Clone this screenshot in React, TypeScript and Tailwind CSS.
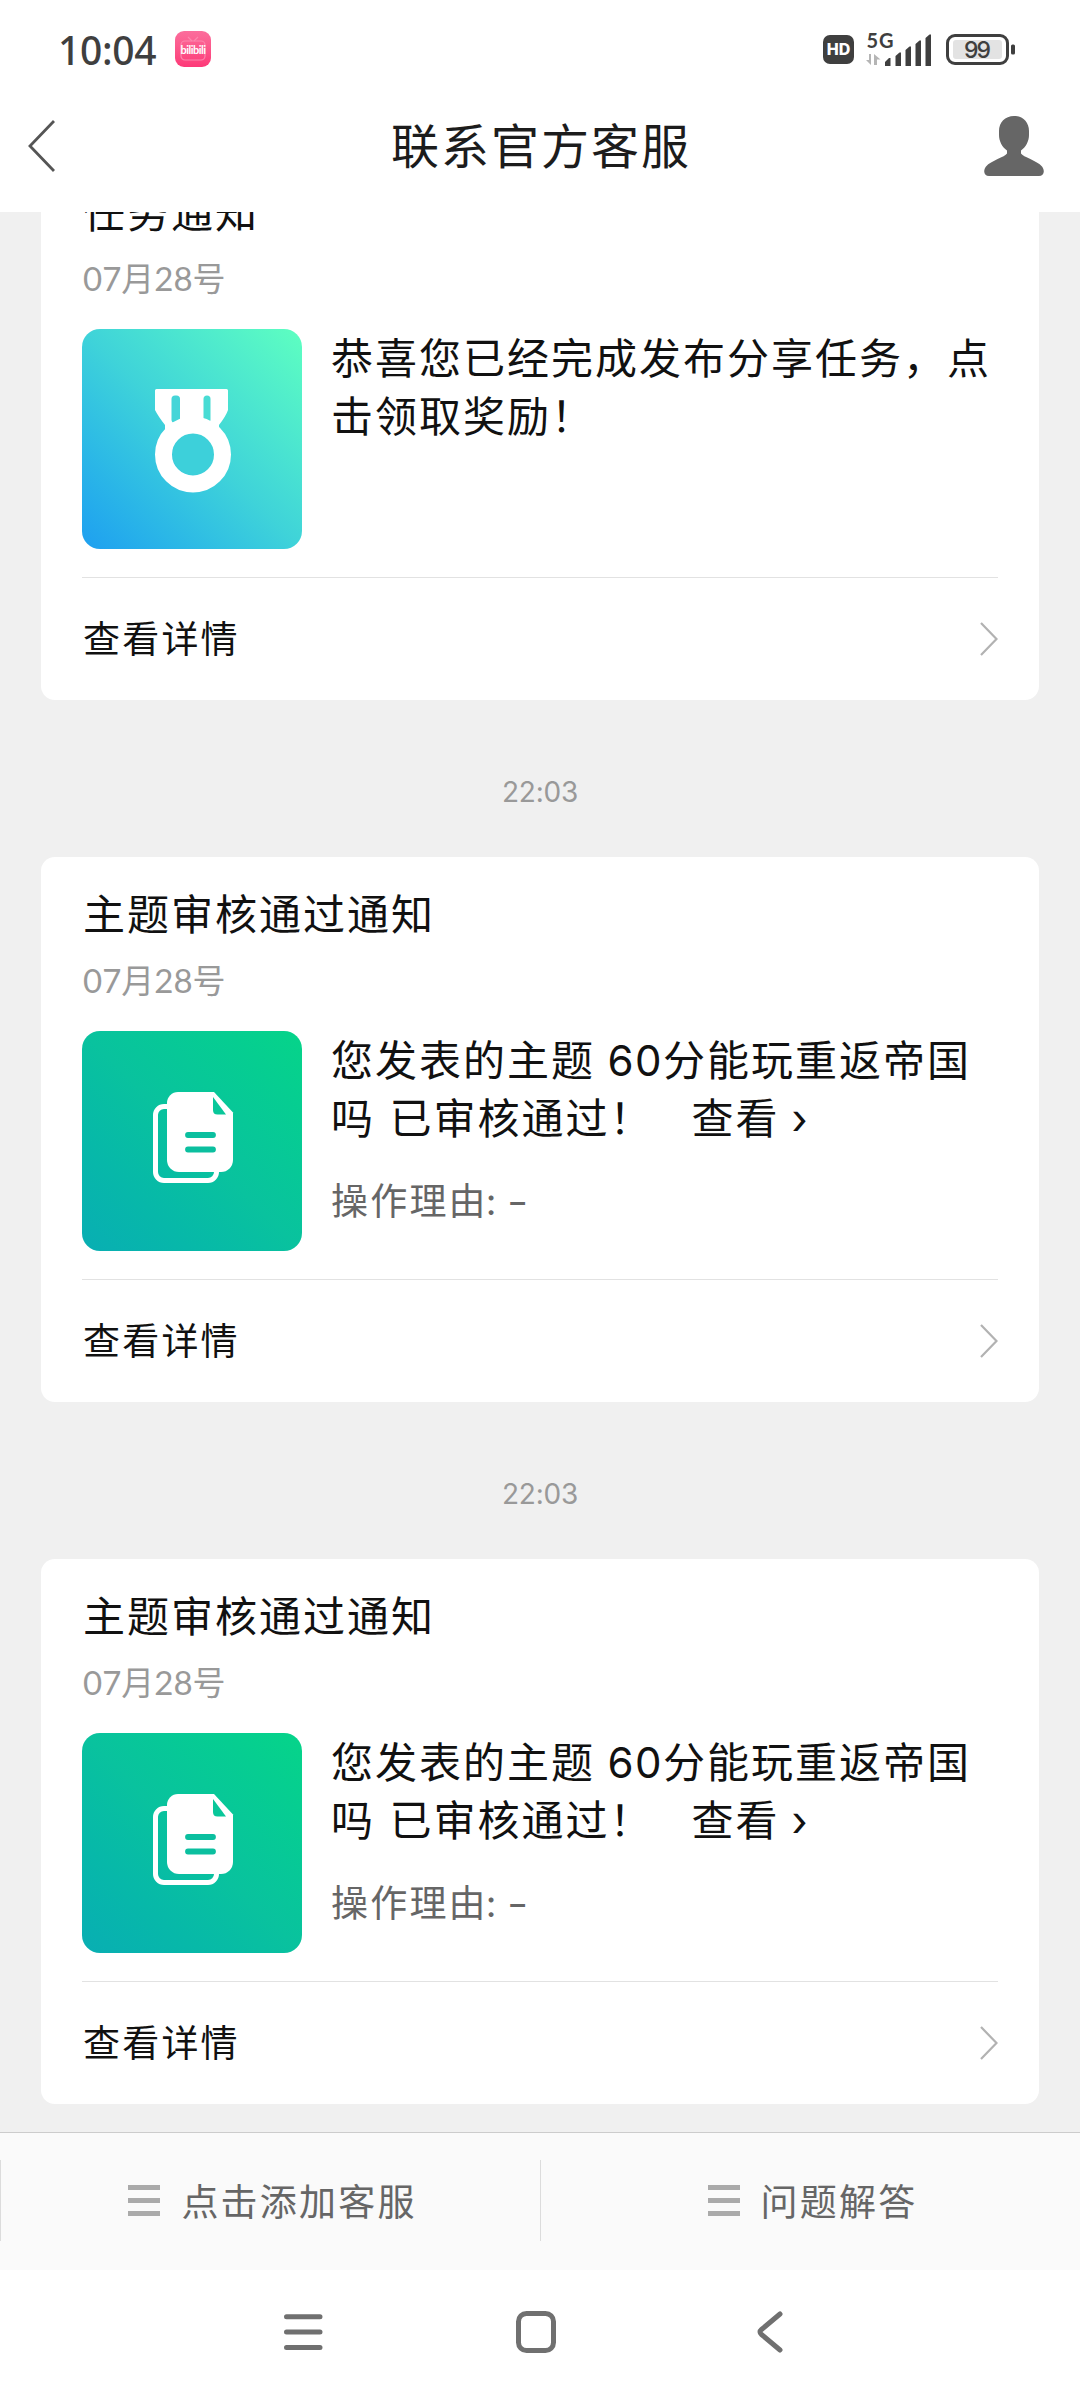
/**
 * Service account chat — status bar, header, notice cards and bottom menu.
 */

// ─── Types ────────────────────────────────────────────────────────────────────

interface Notice {
    id: number;
    /** Time shown above the card */
    time?: string;
    title: string;
    date: string;
    kind: "medal" | "topic";
}

const NOTICES: Notice[] = [
    { id: 1, title: "任务通知", date: "07月28号", kind: "medal" },
    { id: 2, time: "22:03", title: "主题审核通过通知", date: "07月28号", kind: "topic" },
    { id: 3, time: "22:03", title: "主题审核通过通知", date: "07月28号", kind: "topic" },
];

// ─── Icons ────────────────────────────────────────────────────────────────────

function BilibiliIcon() {
    return (
        <div className="relative flex h-9 w-9 items-center justify-center rounded-[9px] bg-linear-to-b from-[#fb6d9c] to-[#fd3878]">
            <svg className="absolute inset-0" width="36" height="36" viewBox="0 0 36 36" fill="none" stroke="#fc86ad" strokeWidth="1.2">
                <path d="M13 6l4 4M23 6l-4 4" />
                <rect x="6" y="10" width="24" height="19" rx="4" />
            </svg>
            <span className="relative font-['Lato',sans-serif] text-[11px] leading-none font-bold tracking-[-0.5px] text-white">
                bilibili
            </span>
        </div>
    );
}

function SignalIcon() {
    return (
        <svg className="overflow-visible" width="66" height="34" viewBox="0 0 66 34" fill="#3f3f3f">
            <text x="0.5" y="15.5" fontSize="20" fontWeight="700" fontFamily="Lato, sans-serif" textLength="27">
                5G
            </text>
            <path d="M5 22v11L0 28h3v-6zM8 22l6.500 5.500H11V33H8z" fill="#b5b5b5" />
            <path d="M19 30l4-4h1.500v8H19zM29.500 24l4-3.500H35V34h-5.500zM39.500 18l4-3.500H45V34h-5.500zM49.500 12l4-3.500H55V34h-5.500zM59.500 6l4-3.500H65V34h-5.500z" />
        </svg>
    );
}

function BatteryIcon() {
    return (
        <svg width="69" height="31" viewBox="0 0 69 31">
            <rect x="1.500" y="1.500" width="60" height="28" rx="7.500" fill="none" stroke="#3f3f3f" strokeWidth="3" />
            <rect x="7" y="6" width="49" height="19" rx="3" fill="#e3e3e3" />
            <rect x="65" y="10.500" width="4" height="10" rx="1.500" fill="#3f3f3f" />
            <text x="31.500" y="24" fontSize="23" fontWeight="500" fontFamily="Inter, sans-serif" textAnchor="middle" textLength="27" fill="#3f3f3f">
                99
            </text>
        </svg>
    );
}

function UserIcon() {
    return (
        <svg width="60" height="60" viewBox="0 0 60 60" fill="#666">
            <path d="M30 0c9 0 15 6.500 15 15v4c0 6-3 12-8 15.500v3c2 3.500 16 7 21 13 3.500 5 1.500 9.500-3 9.500H5c-4.500 0-6.500-4.500-3-9.500 5-6 19-9.500 21-13v-3c-5-3.500-8-9.500-8-15.500v-4C15 6.500 21 0 30 0z" />
        </svg>
    );
}

function MedalTile() {
    return (
        <div className="h-[220px] w-[220px] shrink-0 rounded-[18px] bg-linear-to-tr from-[#1f9ff0] via-[#3fd3d9] to-[#5effc0]">
            <svg width="220" height="220" viewBox="0 0 220 220" fill="none">
                <path d="M74.500 60h70q1.500 0 1.500 1.500V81q-2 6-9 15v6H83v-6q-7-9-10-15V61.500q0-1.500 1.500-1.500z" fill="#fff" />
                <rect x="89.500" y="66.500" width="8.500" height="27.500" rx="3.500" fill="#45d5d8" />
                <rect x="121.500" y="66.500" width="7" height="27.500" rx="3.500" fill="#48dcd4" />
                <circle cx="111" cy="125.500" r="20.500" fill="#3dd0da" />
                <circle cx="111" cy="125.500" r="29.500" stroke="#fff" strokeWidth="17" />
            </svg>
        </div>
    );
}

function TopicTile() {
    return (
        <div className="h-[220px] w-[220px] shrink-0 rounded-[18px] bg-linear-to-tr from-[#09aeb3] via-[#09c29e] to-[#06d489]">
            <svg width="220" height="220" viewBox="0 0 220 220" fill="none">
                <path d="M88 75.500h-6a8.500 8.500 0 0 0-8.500 8.500v57a8.500 8.500 0 0 0 8.500 8.500h44a8.500 8.500 0 0 0 8.500-8.500v-2" stroke="#fff" strokeWidth="5" />
                <path d="M96 61h36l19 20.500V129a12 12 0 0 1-12 12H97a12 12 0 0 1-12-12V72a11 11 0 0 1 11-11z" fill="#fff" />
                <path d="M131 66l13 17.500h-8.500q-4.500 0-4.500-4.500z" fill="#09c79a" />
                <path d="M106 104h25M106 118.500h25" stroke="#0bbf9f" strokeWidth="5.800" strokeLinecap="round" />
            </svg>
        </div>
    );
}

// ─── Cards ────────────────────────────────────────────────────────────────────

function NoticeBody({ kind }: { kind: Notice["kind"] }) {
    if (kind === "medal") {
        return (
            <p className="-mt-[2px] text-[42px] leading-[58px] tracking-[2px]">
                恭喜您已经完成发布分享任务，点
                <br />
                击领取奖励！
            </p>
        );
    }

    return (
        <div className="-mt-[2px]">
            <p className="text-[42px] leading-[58px] tracking-[2px] whitespace-nowrap">
                您发表的主题 <span className="ml-px font-['Inter',sans-serif] leading-none tracking-[1.500px]">60</span>分能玩重返帝国
                <br />
                <span className="mr-[3px]">吗</span> 已审核通过！
                <span className="ml-[38px]">查看</span>
                <span className="ml-3 font-['Inter',sans-serif] leading-none">›</span>
            </p>
            <p className="mt-[26px] text-[37px] leading-[56px] tracking-[2.200px] text-[#666]">
                操作理由
                <span className="-ml-[2px] font-['Inter',sans-serif] leading-none tracking-normal">: </span>
                <span className="inline-block origin-left scale-x-125 font-['Inter',sans-serif] leading-none">-</span>
            </p>
        </div>
    );
}

function NoticeCard({ notice }: { notice: Notice }) {
    return (
        <div className="mx-[41px] flex h-[545px] shrink-0 flex-col rounded-[14px] bg-white px-[41px] text-[#111]">
            <h2 className="mt-[26px] h-[58px] pl-px text-[42px] leading-[58px] tracking-[2px]">{notice.title}</h2>
            <p className="mt-[15px] h-12 pl-px font-['Lato','Noto_Sans_CJK_SC',sans-serif] text-[33px] leading-[48px] text-[#999]">
                {notice.date}
            </p>
            <div className="mt-[27px] flex gap-[29px]">
                {notice.kind === "medal" ? <MedalTile /> : <TopicTile />}
                <NoticeBody kind={notice.kind} />
            </div>
            <div className="mt-7 flex flex-1 items-center justify-between border-t border-[#e2e2e2]">
                <span className="pb-1 pl-px text-[37px] leading-none tracking-[2.200px]">查看详情</span>
                <svg width="18" height="34" viewBox="0 0 18 34" fill="none" stroke="#b2b2b2" strokeWidth="2.200">
                    <path d="M1 1l15.500 16L1 33" />
                </svg>
            </div>
        </div>
    );
}

function MenuItem({ label }: { label: string }) {
    return (
        <button className="mt-[27px] mb-[29px] flex h-[81px] flex-1 items-center justify-center gap-[21px] border-l border-[#dcdcdc] pl-1">
            <svg width="32" height="31" viewBox="0 0 32 31" fill="#aaa">
                <path d="M0 0h32v5H0zM0 13h32v5H0zM0 26h32v5H0z" />
            </svg>
            <span className="pb-px text-[37px] leading-none tracking-[2.200px] text-[#666]">{label}</span>
        </button>
    );
}

// ─── Page ─────────────────────────────────────────────────────────────────────

export default function App() {
    return (
        <div className="flex h-[2400px] w-[1080px] flex-col overflow-hidden bg-[#f0f0f0] font-['Noto_Sans_CJK_SC',sans-serif]">
            {/* Status bar */}
            <div className="flex h-[98px] shrink-0 items-center bg-white pr-[65px] pl-[58px]">
                <span className="w-[117px] font-['Noto_Sans',sans-serif] text-[39px] leading-none font-medium tracking-[-0.3px] text-[#3f3f3f]">
                    10:04
                </span>
                <BilibiliIcon />
                <div className="ml-auto flex items-center">
                    <span className="flex h-[29px] w-[31px] items-center justify-center rounded-[7px] bg-[#3f3f3f] font-['Inter',sans-serif] text-[16px] leading-none font-extrabold text-white">
                        HD
                    </span>
                    <div className="mr-[14px] ml-3">
                        <SignalIcon />
                    </div>
                    <BatteryIcon />
                </div>
            </div>

            {/* Header */}
            <div className="flex h-[114px] shrink-0 items-center justify-between bg-white pr-9 pb-[18px] pl-7">
                <svg className="mr-[33px]" width="27" height="52" viewBox="0 0 27 52" fill="none" stroke="#555" strokeWidth="2.800">
                    <path d="M26 1L2 26l24 25" />
                </svg>
                <h1 className="pb-[6px] pl-[10px] text-[48px] leading-none tracking-[2px] text-[#1c1c1c]">联系官方客服</h1>
                <UserIcon />
            </div>

            {/* Messages */}
            <div className="h-[1920px] shrink-0 overflow-hidden">
                <div className="-mt-[57px] flex flex-col">
                    {NOTICES.map((notice) => (
                        <div key={notice.id}>
                            {notice.time && (
                                <div className="flex h-[157px] items-center justify-center pt-[26px] font-['Inter',sans-serif] text-[28px] leading-none tracking-[-0.2px] text-[#999]">
                                    {notice.time}
                                </div>
                            )}
                            <NoticeCard notice={notice} />
                        </div>
                    ))}
                </div>
            </div>

            {/* Bottom menu */}
            <div className="flex h-[138px] shrink-0 border-t border-[#ccc] bg-[#fafafa]">
                <MenuItem label="点击添加客服" />
                <MenuItem label="问题解答" />
            </div>

            {/* System navigation */}
            <div className="flex flex-1 bg-white pt-[41px] pl-[284px]">
                <svg width="39" height="42" viewBox="0 0 39 42" fill="none" stroke="#707070" strokeWidth="5" strokeLinecap="round">
                    <path d="M2.500 5.700h33.500M2.500 21h33.500M2.500 36.400h33.500" />
                </svg>
                <svg className="ml-[193px]" width="40" height="42" viewBox="0 0 40 42" fill="none" stroke="#707070" strokeWidth="5">
                    <rect x="2.500" y="2.500" width="35" height="37" rx="8" />
                </svg>
                <svg className="ml-[201px]" width="26" height="42" viewBox="0 0 26 42" fill="none" stroke="#707070" strokeWidth="5" strokeLinecap="round">
                    <path d="M23 3L4.500 18.500q-3 2.500 0 5L23 39" />
                </svg>
            </div>
        </div>
    );
}
